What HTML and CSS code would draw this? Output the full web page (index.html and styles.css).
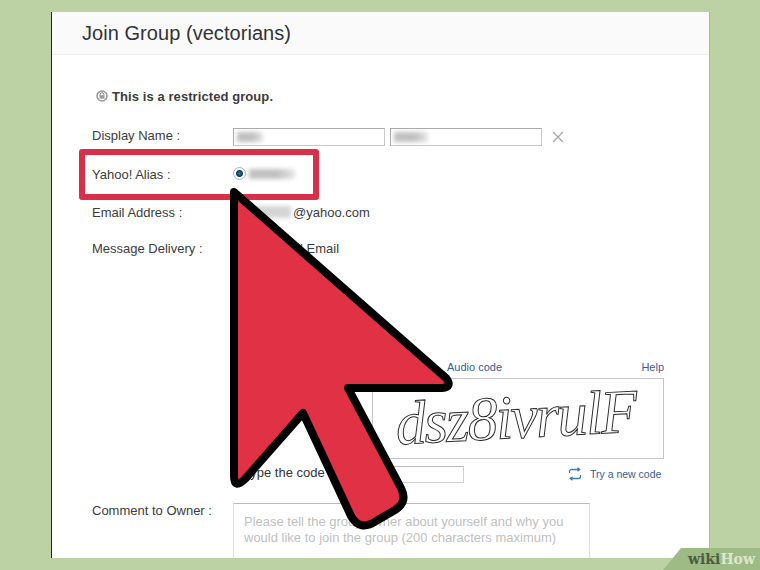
FILE: index.html
```html
<!DOCTYPE html>
<html lang="en">
<head>
  <meta charset="UTF-8">
  <title>Join Group (vectorians)</title>
  <link rel="stylesheet" href="styles.css">
</head>
<body>
  <div class="panel">
    <h1 class="panel-title">Join Group (vectorians)</h1>
    <div class="panel-body">
      <div class="notice">
        <svg class="lock" width="12" height="12" viewBox="0 0 12 12">
          <circle cx="6" cy="6" r="5" fill="#fff" stroke="#999" stroke-width="1.6"/>
          <path d="M4.2 5.4V4.4a1.8 1.8 0 0 1 3.6 0v1" fill="none" stroke="#888" stroke-width="1"/>
          <rect x="3.5" y="5.2" width="5" height="3.4" fill="#999"/>
        </svg>
        This is a restricted group.
      </div>

      <div class="row row-name">
        <div class="label">Display Name :</div>
        <div class="value name-fields">
          <div class="field"><span class="blur blur-first"></span></div>
          <div class="field"><span class="blur blur-last"></span></div>
          <svg class="clear" width="12" height="12" viewBox="0 0 12 12">
            <path d="M1 1l10 10M11 1L1 11" stroke="#a9a9a9" stroke-width="1.4"/>
          </svg>
        </div>
      </div>

      <div class="row row-alias">
        <div class="label">Yahoo! Alias :</div>
        <div class="value">
          <span class="radio"></span>
          <span class="blur blur-alias"></span>
        </div>
      </div>

      <div class="row row-email">
        <div class="label">Email Address :</div>
        <div class="value">
          <span class="blur blur-email"></span>@yahoo.com
        </div>
      </div>

      <div class="row row-delivery">
        <div class="label">Message Delivery :</div>
        <div class="value delivery">Individual Email</div>
      </div>

      <div class="captcha">
        <div class="captcha-links">
          <a class="link audio">Audio code</a>
          <a class="link">Help</a>
        </div>
        <div class="captcha-image"><span class="captcha-text">dsz8ivrulF</span></div>
      </div>

      <div class="row row-code">
        <div class="value code-line">
          <span class="code-label">Type the code</span>
          <div class="code-input"></div>
          <svg class="refresh" width="14" height="14" viewBox="0 0 14 14" fill="none" stroke="#3f7fa8" stroke-width="1.3">
            <path d="M1.5 6V4.5a2 2 0 0 1 2-2h8M9.5 .7l2.2 1.8-2.2 1.8"/>
            <path d="M12.5 8v1.5a2 2 0 0 1-2 2h-8M4.5 9.7l-2.2 1.8 2.2 1.8"/>
          </svg>
          <a class="link try">Try a new code</a>
        </div>
      </div>

      <div class="row row-comment">
        <div class="label">Comment to Owner :</div>
        <div class="value">
          <div class="comment-box">Please tell the group owner about yourself and why you would like to join the group (200 characters maximum)</div>
        </div>
      </div>
    </div>
  </div>

  <div class="highlight"></div>

  <svg class="arrow" width="760" height="570" viewBox="0 0 760 570">
    <path d="M234 192 L446 378 Q453 387 442 388 L348 388 L401 488 Q408 502 395 510 L376 521 Q360 532 351 516 L303 413 L245 479 Q234 490 234 476 Z" fill="#e03145" stroke="#000" stroke-width="8" stroke-linejoin="round"/>
  </svg>

  <div class="badge"><span class="badge-wiki">wiki</span><span class="badge-how">How</span></div>
</body>
</html>
```

FILE: styles.css
```css
* {
  box-sizing: border-box;
}
html, body {
  height: 570px;
}
body {
  margin: 0;
  padding: 12px 50px 12px 51px;
  background-color: #BCD2A5;
  font-family: 'Liberation Sans', Arial, sans-serif;
  font-size: 13px;
  color: #3c3c3c;
  overflow: hidden;
  position: relative;
}
.panel {
  height: 546px;
  background-color: #FFFFFF;
  border-left: 1px solid #1c2a1c;
  border-right: 1px solid #a9b99a;
  overflow: hidden;
}
.panel-title {
  margin: 0;
  height: 43px;
  padding: 9px 0 0 30px;
  background-color: #FAFAFA;
  border-bottom: 1px solid #EEEEEE;
  font-size: 20px;
  font-weight: 400;
  line-height: 24px;
  letter-spacing: 0.05px;
  color: #333;
}
.panel-body {
  padding: 33px 0 0 40px;
}
.notice {
  display: flex;
  align-items: center;
  gap: 4px;
  height: 16px;
  margin-left: 4px;
  font-weight: 700;
  font-size: 13px;
  letter-spacing: 0.08px;
}
.row {
  display: flex;
  align-items: center;
}
.label {
  width: 141px;
  flex-shrink: 0;
}
.value {
  display: flex;
  align-items: center;
  flex: 1;
}
.row-name {
  margin-top: 24px;
  height: 18px;
}
.row-name .label {
  margin-bottom: 4px;
}
.name-fields {
  gap: 5px;
}
.field {
  width: 152px;
  height: 18px;
  padding: 3px;
  border: 1px solid #c8c8c8;
  border-top-color: #aaa;
  border-left-color: #aaa;
}
.clear {
  margin-left: 5px;
}
.blur {
  display: block;
  background: linear-gradient(90deg, #c0c0c0 60%, #e6e6e6);
  filter: blur(2px);
}
.blur-first {
  width: 26px;
  height: 10px;
}
.blur-last {
  width: 34px;
  height: 10px;
}
.row-alias {
  margin-top: 19px;
  height: 18px;
}
.radio {
  width: 13px;
  height: 13px;
  margin-bottom: 2px;
  border: 1px solid #9fb4c4;
  border-radius: 50%;
  background: radial-gradient(circle, #2f7ba3 0, #0f3a55 3px, #fff 4px);
}
.blur-alias {
  width: 46px;
  height: 10px;
  margin-left: 3px;
}
.row-email {
  margin-top: 20px;
  height: 18px;
}
.blur-email {
  width: 36px;
  height: 12px;
  margin: 0 2px 0 22px;
  background: #d4d4d4;
}
.row-delivery {
  margin-top: 18px;
  height: 18px;
}
.delivery {
  padding-left: 15px;
}
.captcha {
  margin: 103px 0 0 280px;
  width: 292px;
}
.captcha-links {
  display: flex;
  justify-content: space-between;
  height: 14px;
  padding-left: 75px;
  margin-bottom: 4px;
}
.link {
  color: #3b5c92;
  font-size: 11px;
  line-height: 14px;
}
.captcha-image {
  display: flex;
  align-items: center;
  justify-content: center;
  height: 81px;
  border: 1px solid #c4c4c4;
}
.captcha-text {
  font-family: 'Liberation Serif', serif;
  font-style: italic;
  font-size: 62px;
  line-height: 60px;
  letter-spacing: -2px;
  color: #FFFFFF;
  -webkit-text-stroke: 1px #2a2a2a;
  transform: translate(-2px, -2px) scaleX(0.98) rotate(-3deg);
}
.row-code {
  margin: 6px 0 0 141px;
  height: 18px;
}
.code-label {
  margin-left: 10px;
  margin-bottom: 4px;
  width: 95px;
  color: #333;
}
.code-input {
  width: 126px;
  height: 17px;
  border: 1px solid #d0d0d0;
  border-top-color: #bbb;
}
.refresh {
  margin-left: 104px;
}
.try {
  margin-left: 8px;
  font-size: 10.5px;
}
.row-comment {
  margin-top: 20px;
  align-items: flex-start;
}
.comment-box {
  width: 357px;
  height: 70px;
  padding: 10px 10px;
  border: 1px solid #dedede;
  border-top-color: #bbb;
  color: #bfbfbf;
  line-height: 16px;
}
.highlight {
  position: absolute;
  left: 79px;
  top: 149px;
  width: 240px;
  height: 51px;
  border: 6px solid #D9304A;
  border-radius: 3px;
}
.arrow {
  position: absolute;
  left: 0;
  top: 0;
}
.badge {
  position: absolute;
  right: 0;
  bottom: 0;
  width: 97px;
  height: 22px;
  padding: 2px 0 0 25px;
  background-color: #9FBB85;
  clip-path: polygon(18px 0, 100% 0, 100% 100%, 0 100%);
  font-family: 'DejaVu Serif', serif;
  font-weight: 700;
  font-size: 14px;
  line-height: 18px;
  white-space: nowrap;
}
.badge-wiki {
  color: #4a5c41;
}
.badge-how {
  color: #DCE8CE;
}
```
